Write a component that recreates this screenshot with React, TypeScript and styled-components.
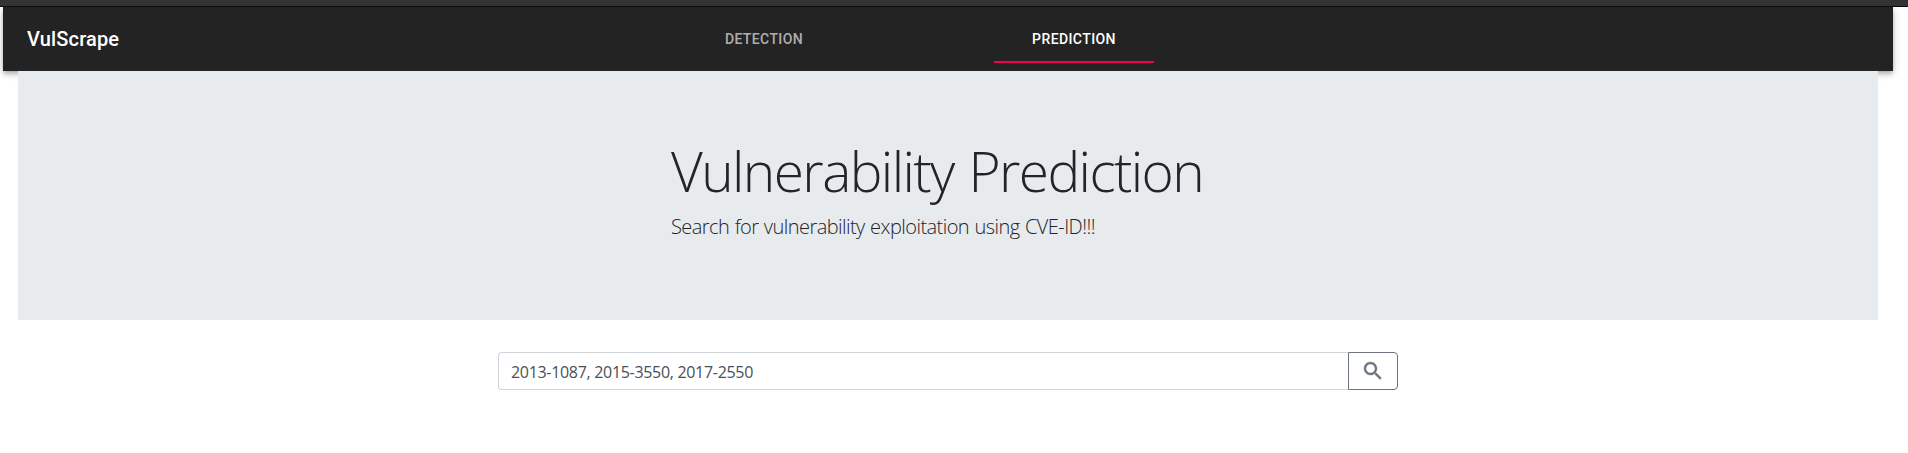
import React from "react";
import styled, { createGlobalStyle } from "styled-components";

const GlobalStyle = createGlobalStyle`
  * { box-sizing: border-box; }
  body {
    margin: 0;
    background: #fff;
    color: #212529;
    font-family: "Segoe UI", "Open Sans", "Noto Sans", sans-serif;
    font-size: 16px;
    line-height: 1.5;
    overflow: hidden;
  }
`;

const Page = styled.div`
  height: 453px;
  display: flex;
  flex-direction: column;
`;

const TopStrip = styled.div`
  position: relative;
  z-index: 2;
  height: 7px;
  flex: none;
  background: #333336;
  border-bottom: 1px solid #0c0c0c;
`;

const AppBar = styled.header`
  display: flex;
  height: 64px;
  flex: none;
  margin: 0 15px 0 3px;
  padding-left: 24px;
  background: #232323;
  font-family: Roboto, sans-serif;
  font-weight: 500;
  box-shadow: 0 2px 4px -1px rgba(0, 0, 0, 0.2), 0 4px 5px 0 rgba(0, 0, 0, 0.14),
    0 1px 10px 0 rgba(0, 0, 0, 0.12);
`;

const Brand = styled.div`
  width: 657px;
  color: #fff;
  font-size: 20px;
  line-height: 64px;
  letter-spacing: 0.15px;
`;

const Tabs = styled.nav`
  display: flex;
  gap: 150px;
  padding: 8px 0;
`;

const Tab = styled.a<{ $active?: boolean }>`
  width: 160px;
  height: 48px;
  border-bottom: 2px solid ${(p) => (p.$active ? "#f50057" : "transparent")};
  color: ${(p) => (p.$active ? "#fff" : "rgba(255, 255, 255, 0.65)")};
  font-size: 14px;
  line-height: 48px;
  letter-spacing: 0.4px;
  text-align: center;
  text-transform: uppercase;
`;

const Jumbotron = styled.section`
  position: relative;
  height: 249px;
  flex: none;
  margin: 0 30px 0 18px;
  padding: 66px 0 0 653px;
  background: #e8ebee;
`;

const Title = styled.h1`
  margin: 0 0 8px;
  font-size: 55px;
  font-weight: 300;
  line-height: 67px;
  letter-spacing: -1.6px;
  word-spacing: 2px;
  white-space: nowrap;
`;

const Lead = styled.p`
  margin: 0;
  font-size: 20px;
  font-weight: 300;
  line-height: 30px;
  letter-spacing: -0.55px;
  word-spacing: 0.7px;
  white-space: nowrap;
`;

const SearchGroup = styled.form`
  display: flex;
  width: 900px;
  height: 38px;
  margin: 32px 0 0 498px;
`;

const SearchInput = styled.input`
  width: 850px;
  padding: 7px 12px 5px;
  border: 1px solid #ced4da;
  border-right: 0;
  border-radius: 4px 0 0 4px;
  outline: 0;
  background: #fff;
  color: #495057;
  font: inherit;
  letter-spacing: -0.31px;
`;

const SearchButton = styled.button`
  display: flex;
  align-items: center;
  justify-content: center;
  width: 50px;
  padding: 0;
  border: 1px solid #6c757d;
  border-radius: 0 4px 4px 0;
  background: #fff;
  color: #6c757d;
`;

export default function App() {
  return (
    <Page>
      <GlobalStyle />
      <TopStrip />
      <AppBar>
        <Brand>VulScrape</Brand>
        <Tabs>
          <Tab>Detection</Tab>
          <Tab $active>Prediction</Tab>
        </Tabs>
      </AppBar>
      <Jumbotron>
        <Title>Vulnerability Prediction</Title>
        <Lead>Search for vulnerability exploitation using CVE-ID!!!</Lead>
      </Jumbotron>
      <SearchGroup>
        <SearchInput defaultValue="2013-1087, 2015-3550, 2017-2550" />
        <SearchButton type="button" aria-label="Search">
          <svg width="24" height="24" viewBox="0 0 24 24" fill="currentColor" stroke="currentColor" strokeWidth="0.4">
            <path d="M15.5 14h-.79l-.28-.27C15.41 12.59 16 11.11 16 9.5 16 5.91 13.09 3 9.5 3S3 5.91 3 9.5 5.91 16 9.5 16c1.61 0 3.09-.59 4.23-1.57l.27.28v.79l5 4.99L20.49 19l-4.99-5zm-6 0C7.01 14 5 11.99 5 9.5S7.01 5 9.5 5 14 7.01 14 9.5 11.99 14 9.5 14z" />
          </svg>
        </SearchButton>
      </SearchGroup>
    </Page>
  );
}
